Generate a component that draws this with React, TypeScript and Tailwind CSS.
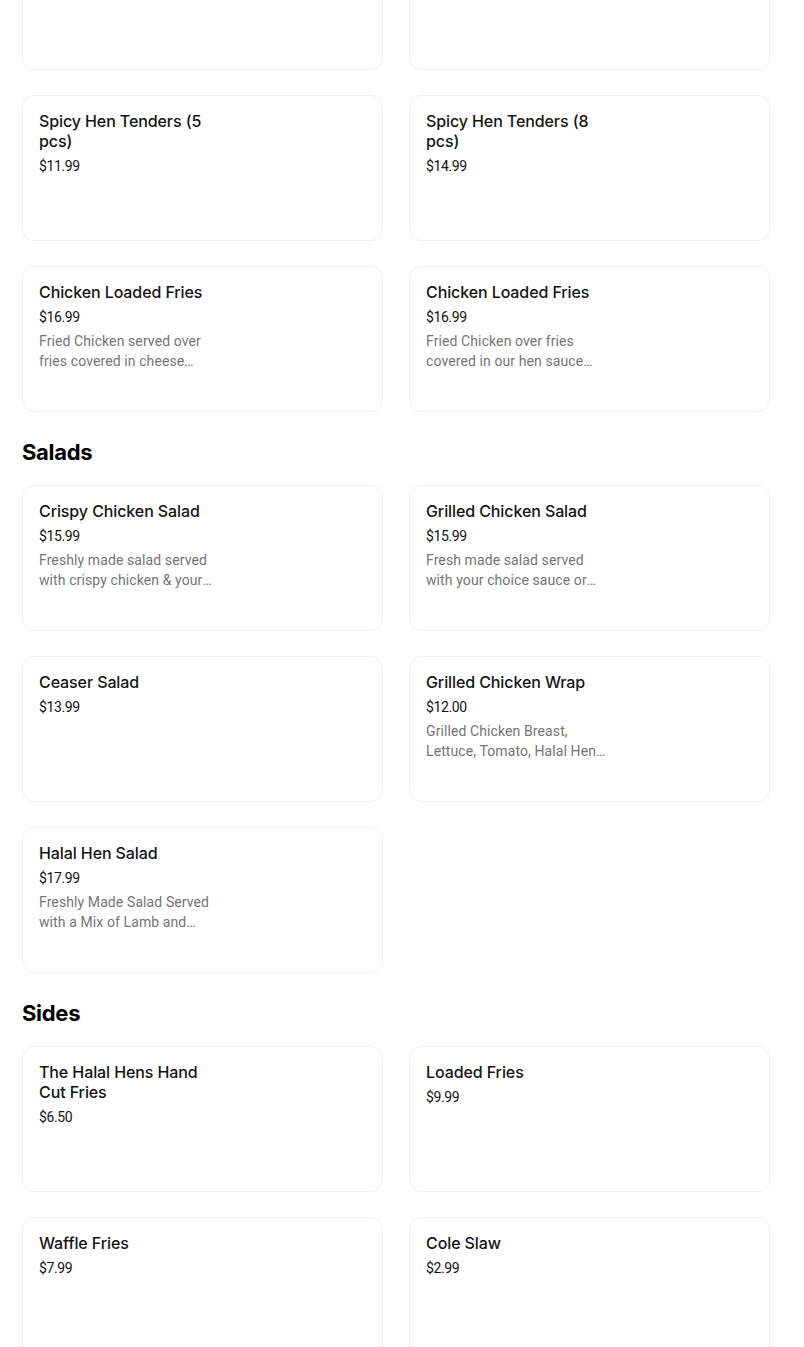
import React from 'react';

type Item = { name: string; price: string; desc?: string };

const TOP: Item[] = [
  { name: 'Hen Tenders (5 pcs)', price: '$10.99' },
  { name: 'Hen Tenders (8 pcs)', price: '$13.99' },
  { name: 'Spicy Hen Tenders (5 pcs)', price: '$11.99' },
  { name: 'Spicy Hen Tenders (8 pcs)', price: '$14.99' },
  { name: 'Chicken Loaded Fries', price: '$16.99', desc: 'Fried Chicken served over fries covered in cheese sauce and our signature hen sauce' },
  { name: 'Chicken Loaded Fries', price: '$16.99', desc: 'Fried Chicken over fries covered in our hen sauce and cheese sauce' },
];

const SALADS: Item[] = [
  { name: 'Crispy Chicken Salad', price: '$15.99', desc: 'Freshly made salad served with crispy chicken & your choice of dressing' },
  { name: 'Grilled Chicken Salad', price: '$15.99', desc: 'Fresh made salad served with your choice sauce or dressing' },
  { name: 'Ceaser Salad', price: '$13.99' },
  { name: 'Grilled Chicken Wrap', price: '$12.00', desc: 'Grilled Chicken Breast, Lettuce, Tomato, Halal Hen Sauce' },
  { name: 'Halal Hen Salad', price: '$17.99', desc: 'Freshly Made Salad Served with a Mix of Lamb and Chicken' },
];

const SIDES: Item[] = [
  { name: 'The Halal Hens Hand Cut Fries', price: '$6.50' },
  { name: 'Loaded Fries', price: '$9.99' },
  { name: 'Waffle Fries', price: '$7.99' },
  { name: 'Cole Slaw', price: '$2.99' },
];

function Card({ item }: { item: Item }) {
  return (
    <div className="h-[146px] rounded-xl border border-[#f1f1f1] bg-white pl-4 pt-[15px]">
      <div className="w-[180px]">
        <div className="text-[16px] font-medium leading-5 tracking-[-0.1px] text-[#141414]">{item.name}</div>
        <div className="mt-[5px] font-['Roboto',sans-serif] text-[14px] leading-5 tracking-[-0.4px] text-[#141414]">{item.price}</div>
        {item.desc && (
          <div className="mt-1 line-clamp-2 font-['Roboto',sans-serif] text-[14px] leading-5 tracking-[0.1px] text-[#757575]">{item.desc}</div>
        )}
      </div>
    </div>
  );
}

function Grid({ items }: { items: Item[] }) {
  return (
    <div className="grid grid-cols-2 gap-x-[26px] gap-y-[25px]">
      {items.map((it, i) => <Card key={i} item={it} />)}
    </div>
  );
}

function Heading({ children }: { children: React.ReactNode }) {
  return (
    <h2 className="mt-[26px] mb-[19px] text-[22px] font-bold leading-7 tracking-[-0.3px] text-black">{children}</h2>
  );
}

export default function App() {
  return (
    <div className="min-h-screen overflow-hidden bg-white font-['Inter',sans-serif]">
      <div className="ml-[22px] mr-[34px] mt-[-76px]">
        <Grid items={TOP} />
        <Heading>Salads</Heading>
        <Grid items={SALADS} />
        <Heading>Sides</Heading>
        <Grid items={SIDES} />
      </div>
    </div>
  );
}
